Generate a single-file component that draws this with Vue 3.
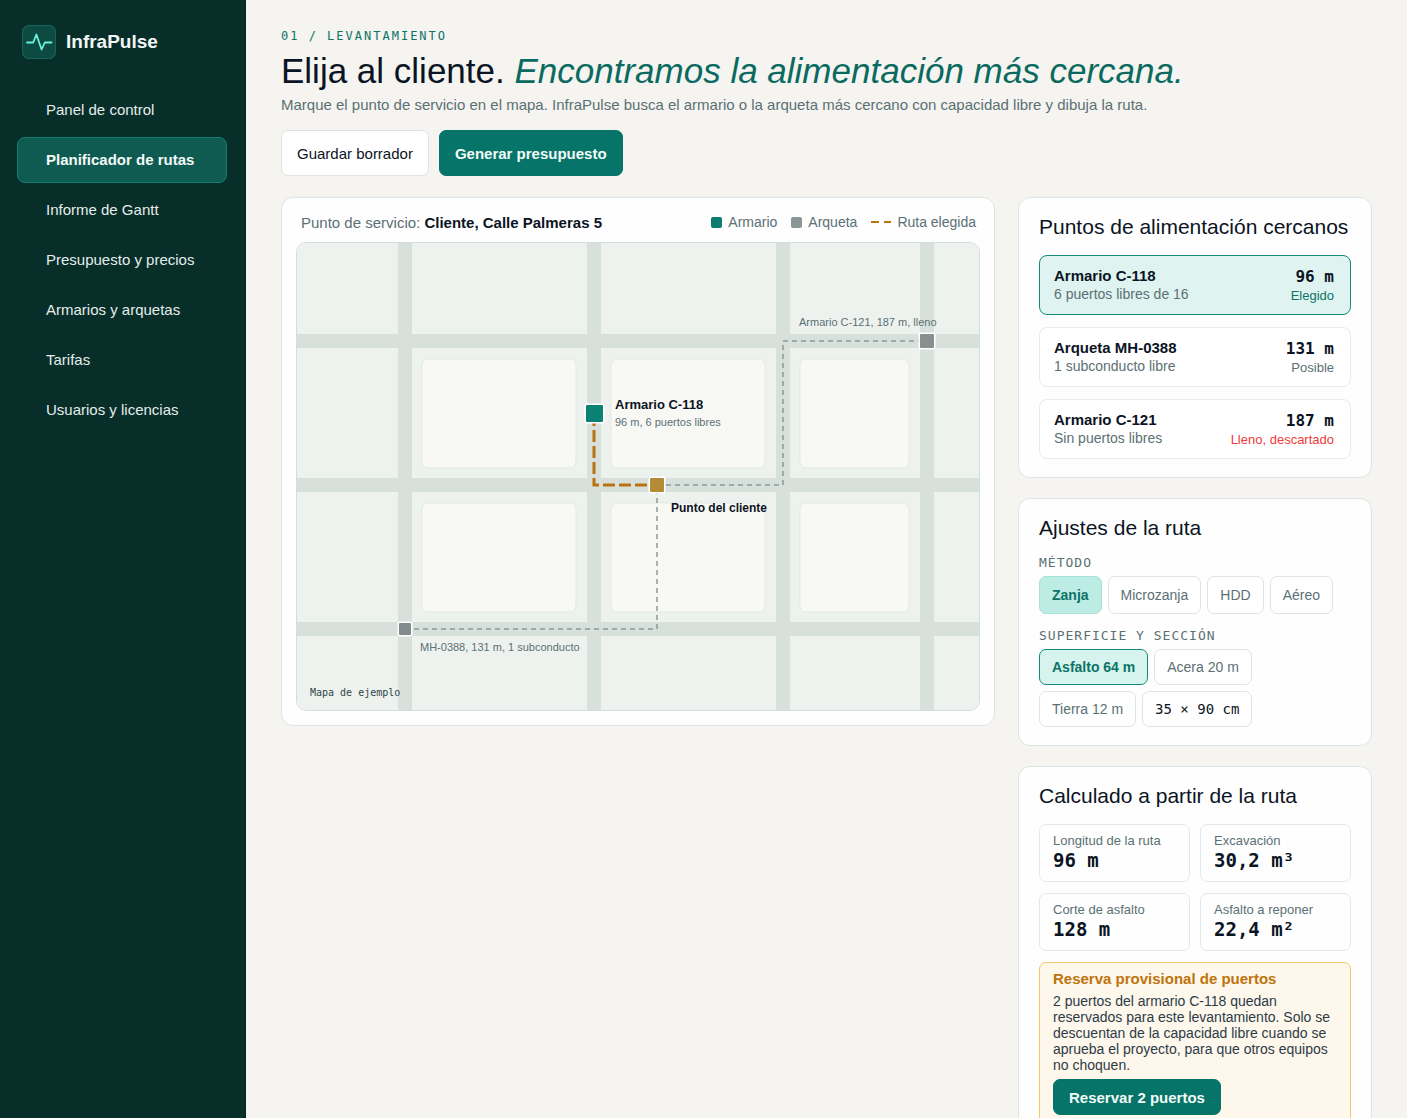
<script setup>
import { ref } from 'vue'

const navItems = [
  'Panel de control',
  'Planificador de rutas',
  'Informe de Gantt',
  'Presupuesto y precios',
  'Armarios y arquetas',
  'Tarifas',
  'Usuarios y licencias',
]
const activeNav = ref('Planificador de rutas')

const points = [
  { id: 'c118', name: 'Armario C-118', detail: '6 puertos libres de 16', distance: '96 m', status: 'Elegido', tone: 'ok' },
  { id: 'mh0388', name: 'Arqueta MH-0388', detail: '1 subconducto libre', distance: '131 m', status: 'Posible', tone: 'muted' },
  { id: 'c121', name: 'Armario C-121', detail: 'Sin puertos libres', distance: '187 m', status: 'Lleno, descartado', tone: 'bad' },
]
const selectedPoint = ref('c118')

const methods = ['Zanja', 'Microzanja', 'HDD', 'Aéreo']
const method = ref('Zanja')

const surfaces = ['Asfalto 64 m', 'Acera 20 m', 'Tierra 12 m']
const surface = ref('Asfalto 64 m')

const metrics = [
  { label: 'Longitud de la ruta', value: '96 m' },
  { label: 'Excavación', value: '30,2 m³' },
  { label: 'Corte de asfalto', value: '128 m' },
  { label: 'Asfalto a reponer', value: '22,4 m²' },
]

const streetsX = [101, 290, 479, 623]
const streetsY = [91, 235, 379]
const blocks = [
  { x: 125, y: 116, w: 154 },
  { x: 314, y: 116, w: 154 },
  { x: 503, y: 116, w: 109 },
  { x: 125, y: 260, w: 154 },
  { x: 314, y: 260, w: 154 },
  { x: 503, y: 260, w: 109 },
]
</script>

<template>
  <div class="app">
    <aside class="sidebar">
      <div class="brand">
        <span class="brand-mark">
          <svg width="34" height="34" viewBox="0 0 34 34" fill="none" aria-hidden="true">
            <path d="M5 17.5h6.2l3.2-8 5.2 15 3.2-7H29.500" stroke="#6cf0e0" stroke-width="1.8" stroke-linecap="round" stroke-linejoin="round" />
          </svg>
        </span>
        <span class="brand-name">InfraPulse</span>
      </div>
      <nav class="nav" aria-label="Principal">
        <a
          v-for="item in navItems"
          :key="item"
          href="#"
          class="nav-link"
          :class="{ active: item === activeNav }"
          :aria-current="item === activeNav ? 'page' : undefined"
          @click.prevent="activeNav = item"
        >{{ item }}</a>
      </nav>
    </aside>

    <main class="main">
      <header class="head">
        <p class="eyebrow">01 / LEVANTAMIENTO</p>
        <h1>Elija al cliente. <em>Encontramos la alimentación más cercana.</em></h1>
        <p class="lead">Marque el punto de servicio en el mapa. InfraPulse busca el armario o la arqueta más cercano con capacidad libre y dibuja la ruta.</p>
        <div class="actions">
          <button type="button" class="btn">Guardar borrador</button>
          <button type="button" class="btn primary">Generar presupuesto</button>
        </div>
      </header>

      <div class="grid">
        <section class="card map-card">
          <div class="map-head">
            <p class="map-title">Punto de servicio: <strong>Cliente, Calle Palmeras 5</strong></p>
            <ul class="legend">
              <li><span class="swatch cabinet"></span>Armario</li>
              <li><span class="swatch manhole"></span>Arqueta</li>
              <li>
                <svg width="20" height="4" viewBox="0 0 20 4" aria-hidden="true">
                  <path d="M0 2h20" stroke="#b87514" stroke-width="2" stroke-dasharray="8 5" />
                </svg>Ruta elegida
              </li>
            </ul>
          </div>
          <div class="map">
            <svg viewBox="0 0 682 467" role="img" aria-label="Mapa de ejemplo con la ruta elegida">
              <rect width="682" height="467" fill="#edf2ef" />
              <g fill="#d7e0db">
                <rect v-for="x in streetsX" :key="'x' + x" :x="x" y="0" width="14" height="467" />
                <rect v-for="y in streetsY" :key="'y' + y" x="0" :y="y" width="682" height="14" />
              </g>
              <rect
                v-for="(b, i) in blocks"
                :key="i"
                :x="b.x"
                :y="b.y"
                :width="b.w"
                height="109"
                rx="6"
                fill="#f8f8f5"
                stroke="#e3e9e6"
              />
              <path d="M108 386H360V242H486V98H630" class="route alt" />
              <path d="M297 171V242H360" class="route chosen" />
              <rect x="289" y="162" width="17" height="17" rx="1" class="marker" fill="#0b8174" />
              <rect x="353" y="235" width="14" height="14" rx="1" class="marker" fill="#b58b37" />
              <rect x="623" y="91" width="14" height="14" rx="1" class="marker" fill="#87908f" />
              <rect x="102" y="380" width="12" height="12" rx="1" class="marker" fill="#828c8c" />
              <text x="318" y="166" class="t-strong t-13">Armario C-118</text>
              <text x="318" y="183" class="t-muted">96 m, 6 puertos libres</text>
              <text x="374" y="269" class="t-strong t-12">Punto del cliente</text>
              <text x="502" y="83" class="t-muted">Armario C-121, 187 m, lleno</text>
              <text x="123" y="408" class="t-muted">MH-0388, 131 m, 1 subconducto</text>
              <text x="13" y="453" class="t-mono">Mapa de ejemplo</text>
            </svg>
          </div>
        </section>

        <div class="side">
          <section class="card panel">
            <h2>Puntos de alimentación cercanos</h2>
            <div class="points">
              <button
                v-for="p in points"
                :key="p.id"
                type="button"
                class="point"
                :class="{ selected: p.id === selectedPoint }"
                :aria-pressed="p.id === selectedPoint"
                @click="selectedPoint = p.id"
              >
                <span class="point-text">
                  <span class="point-name">{{ p.name }}</span>
                  <span class="point-detail">{{ p.detail }}</span>
                </span>
                <span class="point-side">
                  <span class="point-distance">{{ p.distance }}</span>
                  <span class="point-status" :class="p.tone">{{ p.status }}</span>
                </span>
              </button>
            </div>
          </section>

          <section class="card panel">
            <h2>Ajustes de la ruta</h2>
            <p id="method-label" class="label">MÉTODO</p>
            <div class="chips methods" role="group" aria-labelledby="method-label">
              <button
                v-for="m in methods"
                :key="m"
                type="button"
                class="chip"
                :class="{ on: m === method }"
                :aria-pressed="m === method"
                @click="method = m"
              >{{ m }}</button>
            </div>
            <p id="surface-label" class="label">SUPERFICIE Y SECCIÓN</p>
            <div class="chips surfaces" role="group" aria-labelledby="surface-label">
              <button
                v-for="s in surfaces"
                :key="s"
                type="button"
                class="chip"
                :class="{ on: s === surface }"
                :aria-pressed="s === surface"
                @click="surface = s"
              >{{ s }}</button>
              <span class="chip section">35 × 90 cm</span>
            </div>
          </section>

          <section class="card panel">
            <h2>Calculado a partir de la ruta</h2>
            <dl class="metrics">
              <div v-for="m in metrics" :key="m.label" class="metric">
                <dt>{{ m.label }}</dt>
                <dd>{{ m.value }}</dd>
              </div>
            </dl>
            <div class="notice">
              <h3>Reserva provisional de puertos</h3>
              <p>2 puertos del armario C-118 quedan reservados para este levantamiento. Solo se descuentan de la capacidad libre cuando se aprueba el proyecto, para que otros equipos no choquen.</p>
              <button type="button" class="btn primary small">Reservar 2 puertos</button>
            </div>
          </section>
        </div>
      </div>
    </main>
  </div>
</template>

<style>
body {
  margin: 0;
  background: #f5f4f0;
}
</style>

<style scoped>
* {
  box-sizing: border-box;
}

.app {
  --ink: #0b1424;
  --muted: #5b7074;
  --teal: #0c7367;
  --line: #dbe5e5;
  --mono: "DejaVu Sans Mono", monospace;
  display: flex;
  height: 100vh;
  font-family: "Liberation Sans", Arial, sans-serif;
  font-size: 15px;
  color: var(--ink);
  background: #f5f4f0;
}

h1, h2, h3, p, ul, dl, dd {
  margin: 0;
}

button {
  font-family: inherit;
  cursor: pointer;
}

.sidebar {
  flex: 0 0 246px;
  padding: 25px 18px 0 17px;
  background: #072e29;
  border-right: 1px solid #02231f;
}

.brand {
  display: flex;
  align-items: center;
  gap: 10px;
  padding-left: 5px;
}

.brand-mark {
  display: flex;
  width: 34px;
  height: 34px;
  border-radius: 7px;
  background: #0d4a42;
  box-shadow: inset 0 0 0 1px #17645a;
}

.brand-name {
  font-size: 19px;
  font-weight: 700;
  color: #f2f7f5;
}

.nav {
  display: flex;
  flex-direction: column;
  gap: 4px;
  margin-top: 28px;
}

.nav-link {
  height: 46px;
  padding-left: 28px;
  border: 1px solid transparent;
  border-radius: 8px;
  line-height: 44px;
  color: #e4edea;
  text-decoration: none;
}

.nav-link.active {
  background: #105b51;
  border-color: #148073;
  font-weight: 700;
  color: #f2faf7;
}

.main {
  flex: 1;
  min-width: 0;
  padding: 28px 35px 24px;
  overflow-y: auto;
  scrollbar-width: none;
}

.eyebrow {
  font-family: var(--mono);
  font-size: 12px;
  line-height: 16px;
  letter-spacing: 2px;
  color: var(--teal);
}

h1 {
  margin-top: 7px;
  font-size: 35px;
  line-height: 40px;
  font-weight: 400;
}

h1 em {
  color: #0b6a60;
}

.lead {
  margin-top: 4px;
  line-height: 20px;
  color: var(--muted);
}

.actions {
  display: flex;
  gap: 10px;
  margin-top: 15px;
}

.btn {
  height: 46px;
  padding: 0 15px;
  border: 1px solid var(--line);
  border-radius: 7px;
  background: #fff;
  font-size: 15px;
  color: var(--ink);
}

.btn.primary {
  border-color: #067468;
  background: #067468;
  font-weight: 700;
  color: #f3fbf8;
}

.btn.small {
  height: 36px;
}

.grid {
  display: grid;
  grid-template-columns: minmax(0, 1fr) 354px;
  align-items: start;
  gap: 23px;
  margin-top: 21px;
}

.card {
  border: 1px solid var(--line);
  border-radius: 12px;
  background: #fefefe;
}

.map-card {
  padding: 14px;
}

.map-head {
  display: flex;
  align-items: center;
  justify-content: space-between;
  height: 20px;
  margin-bottom: 10px;
  padding: 0 4px 0 5px;
  color: var(--muted);
}

.map-title strong {
  color: var(--ink);
}

.legend {
  display: flex;
  gap: 14px;
  padding: 0;
  list-style: none;
  font-size: 14px;
}

.legend li {
  display: flex;
  align-items: center;
  gap: 6px;
}

.swatch {
  width: 11px;
  height: 11px;
  border-radius: 2px;
}

.swatch.cabinet {
  background: #0b7d70;
}

.swatch.manhole {
  background: #8a9695;
}

.map {
  border: 1px solid #d3dfdd;
  border-radius: 10px;
  overflow: hidden;
}

.map svg {
  display: block;
  width: 100%;
  height: auto;
}

.route {
  fill: none;
}

.route.alt {
  stroke: #8b9b99;
  stroke-width: 1.5;
  stroke-dasharray: 5 4;
}

.route.chosen {
  stroke: #b8720f;
  stroke-width: 3;
  stroke-dasharray: 12 4;
}

.marker {
  stroke: #fff;
  stroke-width: 3;
  paint-order: stroke;
}

.t-strong {
  font-weight: 700;
  fill: var(--ink);
}

.t-13 {
  font-size: 13px;
}

.t-12 {
  font-size: 12px;
}

.t-muted {
  font-size: 11px;
  fill: var(--muted);
}

.t-mono {
  font-family: var(--mono);
  font-size: 10px;
  fill: #2f4547;
}

.side {
  display: flex;
  flex-direction: column;
  gap: 20px;
}

.panel {
  padding: 16px 20px 18px;
}

h2 {
  font-size: 21px;
  line-height: 26px;
  font-weight: 400;
}

.points {
  display: flex;
  flex-direction: column;
  gap: 12px;
  margin-top: 15px;
}

.point {
  display: flex;
  justify-content: space-between;
  height: 60px;
  padding: 10px 16px 10px 14px;
  border: 1px solid #e5ecec;
  border-radius: 8px;
  background: #fff;
  color: var(--ink);
  text-align: left;
}

.point.selected {
  border-color: #15897c;
  background: #dff4f0;
}

.point-text,
.point-side {
  display: flex;
  flex-direction: column;
}

.point-side {
  align-items: flex-end;
}

.point-name {
  font-size: 15px;
  line-height: 19px;
  font-weight: 700;
}

.point-detail {
  font-size: 14px;
  line-height: 19px;
  color: var(--muted);
}

.point-distance {
  font-family: var(--mono);
  font-size: 16px;
  line-height: 22px;
  font-weight: 700;
}

.point-status {
  font-size: 13px;
  line-height: 16px;
}

.point-status.ok {
  color: var(--teal);
}

.point-status.muted {
  color: var(--muted);
}

.point-status.bad {
  color: #ef3b3b;
}

.label {
  margin-top: 14px;
  font-family: var(--mono);
  font-size: 13px;
  line-height: 16px;
  letter-spacing: 1px;
  color: var(--muted);
}

.chips {
  display: flex;
  flex-wrap: wrap;
  gap: 6px;
  margin-top: 5px;
}

.chip {
  height: 36px;
  padding: 0 12px;
  border: 1px solid var(--line);
  border-radius: 7px;
  background: #fff;
  font-size: 14px;
  line-height: 34px;
  color: var(--muted);
}

.methods .chip {
  height: 38px;
}

.chip.on {
  font-weight: 700;
  color: var(--teal);
}

.methods .chip.on {
  border-color: #a5e2d8;
  background: #bcece3;
}

.surfaces .chip.on {
  border-color: #15897c;
  background: #d6f3ee;
}

.chip.section {
  font-family: var(--mono);
  color: var(--ink);
}

.metrics {
  display: grid;
  grid-template-columns: 1fr 1fr;
  gap: 11px 10px;
  margin-top: 15px;
}

.metric {
  height: 58px;
  padding: 7px 13px;
  border: 1px solid #e1eaea;
  border-radius: 7px;
}

.metric dt {
  font-size: 13px;
  line-height: 18px;
  color: var(--muted);
}

.metric dd {
  font-family: var(--mono);
  font-size: 19px;
  line-height: 20px;
  font-weight: 700;
}

.notice {
  margin-top: 11px;
  padding: 7px 13px 14px;
  border: 1px solid #f5c669;
  border-radius: 7px;
  background: #fef7eb;
}

.notice h3 {
  font-size: 15px;
  line-height: 18px;
  color: #bd740c;
}

.notice p {
  margin: 5px 0 6px;
  font-size: 14px;
  line-height: 16px;
  color: #2c3b48;
}
</style>
